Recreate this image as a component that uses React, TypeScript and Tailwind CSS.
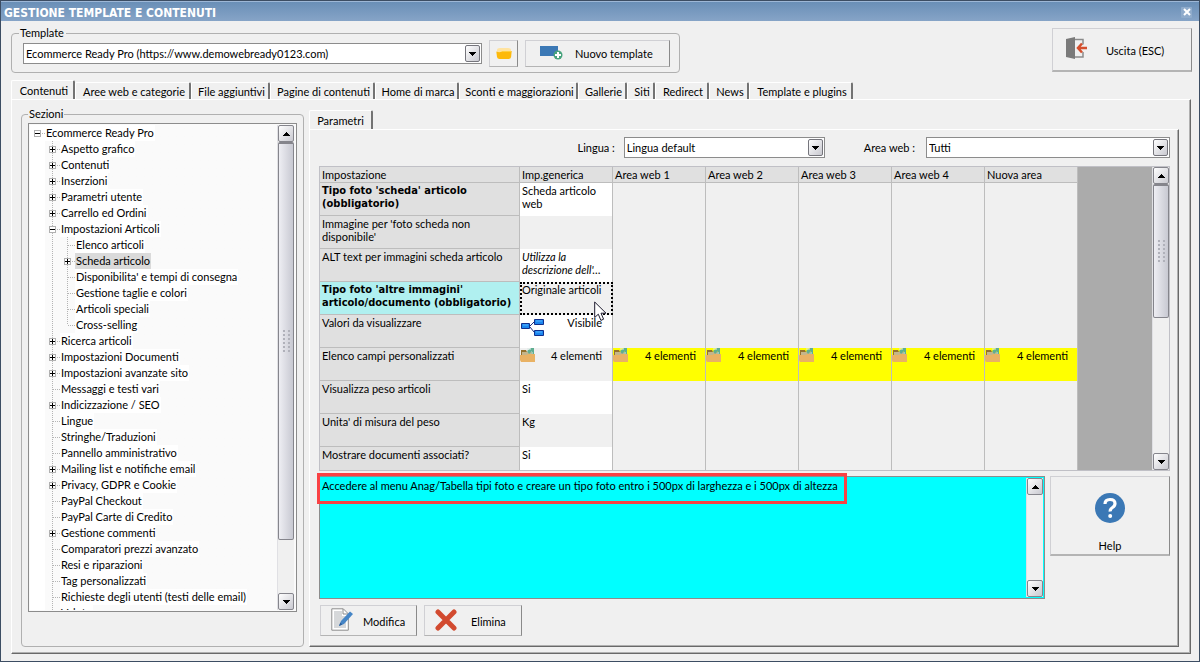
import React, { useState } from 'react';

interface Nodo {
  nome: string;
  livello: number;
  stato?: 'aperto' | 'chiuso';
}

interface Riga {
  nome: string;
  valore: string;
  tipo?: 'struttura' | 'elenco' | 'selezionata' | 'corsivo';
  obbligatorio?: boolean;
}

const schede = [
  { nome: 'Contenuti', width: 'w-[64px]' },
  { nome: 'Aree web e categorie', width: 'w-[116px]' },
  { nome: 'File aggiuntivi', width: 'w-[79px]' },
  { nome: 'Pagine di contenuti', width: 'w-[105px]' },
  { nome: 'Home di marca', width: 'w-[84px]' },
  { nome: 'Sconti e maggiorazioni', width: 'w-[119px]' },
  { nome: 'Gallerie', width: 'w-[49px]' },
  { nome: 'Siti', width: 'w-[28px]' },
  { nome: 'Redirect', width: 'w-[54px]' },
  { nome: 'News', width: 'w-[40px]' },
  { nome: 'Template e plugins', width: 'w-[104px]' }
];

const nodi: Nodo[] = [
  { nome: 'Ecommerce Ready Pro', livello: 0, stato: 'aperto' },
  { nome: 'Aspetto grafico', livello: 1, stato: 'chiuso' },
  { nome: 'Contenuti', livello: 1, stato: 'chiuso' },
  { nome: 'Inserzioni', livello: 1, stato: 'chiuso' },
  { nome: 'Parametri utente', livello: 1, stato: 'chiuso' },
  { nome: 'Carrello ed Ordini', livello: 1, stato: 'chiuso' },
  { nome: 'Impostazioni Articoli', livello: 1, stato: 'aperto' },
  { nome: 'Elenco articoli', livello: 2 },
  { nome: 'Scheda articolo', livello: 2, stato: 'chiuso' },
  { nome: "Disponibilita' e tempi di consegna", livello: 2 },
  { nome: 'Gestione taglie e colori', livello: 2 },
  { nome: 'Articoli speciali', livello: 2 },
  { nome: 'Cross-selling', livello: 2 },
  { nome: 'Ricerca articoli', livello: 1, stato: 'chiuso' },
  { nome: 'Impostazioni Documenti', livello: 1, stato: 'chiuso' },
  { nome: 'Impostazioni avanzate sito', livello: 1, stato: 'chiuso' },
  { nome: 'Messaggi e testi vari', livello: 1 },
  { nome: 'Indicizzazione / SEO', livello: 1, stato: 'chiuso' },
  { nome: 'Lingue', livello: 1 },
  { nome: 'Stringhe/Traduzioni', livello: 1 },
  { nome: 'Pannello amministrativo', livello: 1 },
  { nome: 'Mailing list e notifiche email', livello: 1, stato: 'chiuso' },
  { nome: 'Privacy, GDPR e Cookie', livello: 1, stato: 'chiuso' },
  { nome: 'PayPal Checkout', livello: 1 },
  { nome: 'PayPal Carte di Credito', livello: 1 },
  { nome: 'Gestione commenti', livello: 1, stato: 'chiuso' },
  { nome: 'Comparatori prezzi avanzato', livello: 1 },
  { nome: 'Resi e riparazioni', livello: 1 },
  { nome: 'Tag personalizzati', livello: 1 },
  { nome: 'Richieste degli utenti (testi delle email)', livello: 1 },
  { nome: 'Valute', livello: 1 }
];

const aree = ['Area web 1', 'Area web 2', 'Area web 3', 'Area web 4', 'Nuova area'];

const righe: Riga[] = [
  { nome: "Tipo foto 'scheda' articolo (obbligatorio)", valore: 'Scheda articolo web', obbligatorio: true },
  { nome: "Immagine per 'foto scheda non disponibile'", valore: '' },
  { nome: 'ALT text per immagini scheda articolo', valore: "Utilizza la descrizione dell'…", tipo: 'corsivo' },
  { nome: "Tipo foto 'altre immagini' articolo/documento (obbligatorio)", valore: 'Originale articoli', tipo: 'selezionata', obbligatorio: true },
  { nome: 'Valori da visualizzare', valore: 'Visibile', tipo: 'struttura' },
  { nome: 'Elenco campi personalizzati', valore: '4 elementi', tipo: 'elenco' },
  { nome: 'Visualizza peso articoli', valore: 'Si' },
  { nome: "Unita' di misura del peso", valore: 'Kg' },
  { nome: 'Mostrare documenti associati?', valore: 'Si' }
];

const Freccia: React.FC<{ su?: boolean }> = ({ su }) => (
  <svg width="7" height="4" viewBox="0 0 7 4" shapeRendering="crispEdges">
    <path d={su ? 'M3 0h1v1h1v1h1v1h1v1H0V3h1V2h1V1h1z' : 'M0 0h7v1H6v1H5v1H4v1H3V3H2V2H1V1H0z'} fill="#000" />
  </svg>
);

const BarraScorrimento: React.FC<{ thumb?: string }> = ({ thumb }) => {
  const bottone = 'flex h-[17px] w-full shrink-0 items-center justify-center rounded-[2px] border border-[#85858c] bg-linear-to-br from-white to-[#c9c9d0]';
  return (
    <div className="flex w-[17px] shrink-0 flex-col border-l border-[#e0e0e4] bg-[#f0f0f0]">
      <button type="button" aria-label="Scorri su" className={bottone}><Freccia su /></button>
      <div className="min-h-0 flex-1">
        {thumb && (
          <div className={`flex w-full items-center justify-center rounded-[2px] border border-t-2 border-[#85858c] bg-linear-to-r from-[#eeeef3] to-[#c8c9d2] ${thumb}`}>
            <svg width="7" height="23" viewBox="0 0 7 23" shapeRendering="crispEdges">
              {[0, 4, 8, 12, 16, 20].map(y => (
                <path key={y} d={`M0 ${y}h2v2h-2zM5 ${y}h2v2h-2z`} fill="#b0b1ba" />
              ))}
            </svg>
          </div>
        )}
      </div>
      <button type="button" aria-label="Scorri giù" className={bottone}><Freccia /></button>
    </div>
  );
};

const Tendina: React.FC<{ id: string; valore: string; className: string }> = ({ id, valore, className }) => (
  <div className={`relative h-[21px] ${className}`}>
    <select id={id} className="h-full w-full appearance-none border border-[#8c8c8c] bg-white pt-px pr-5 pl-[2px] text-[11px] leading-[18px]">
      <option>{valore}</option>
    </select>
    <span className="pointer-events-none absolute top-[2px] right-[2px] flex h-[17px] w-[15px] items-center justify-center rounded-[2px] border border-[#75757c] bg-linear-to-br from-white to-[#c9c9d0]">
      <Freccia />
    </span>
  </div>
);

// linee tratteggiate e quadratino +/- davanti alle voci dell'albero
const Guida: React.FC<{ stato?: string; linea: 'no' | 'intera' | 'meta'; ramo?: boolean }> = ({ stato, linea, ramo }) => (
  <svg width="15" height="16" viewBox="0 0 15 16" className="shrink-0" shapeRendering="crispEdges">
    {linea !== 'no' && <path d={linea === 'intera' ? 'M7.5 0V16' : 'M7.5 0V8'} stroke="#b4b4b4" strokeDasharray="1 1" />}
    {ramo && <path d="M8 8.5H15" stroke="#b4b4b4" strokeDasharray="1 1" />}
    {stato && <rect x="4.5" y="5.5" width="6" height="6" fill="#fff" stroke="#b0b0b0" />}
    {stato && <path d="M5 8.5h5" stroke="#000" />}
    {stato === 'chiuso' && <path d="M7.5 6v5" stroke="#000" />}
  </svg>
);

const IconaCartellaFile = () => (
  <svg width="16" height="16" viewBox="0 0 16 16" className="shrink-0">
    <path d="M1 2h5l1 2h7v5H1z" fill="#94712c" />
    <path d="M2 4h9v3H2z" fill="#c5b58a" />
    <path d="M7 3l4-3h3v6h-3l1-3-3 3z" fill="#5fae91" />
    <path d="M7 1h4M12 4v3" stroke="#d9e9e5" />
    <path d="M0 7h7l1-1h7v8H1L0 12z" fill="#e9b264" />
  </svg>
);

const IconaStruttura = () => (
  <svg width="23" height="18" viewBox="0 0 23 18" className="shrink-0">
    <path d="M9 7l4-4M9 8l4 5" stroke="#1a2f80" fill="none" />
    <g fill="#1c86ee" stroke="#10308e">
      <path d="M.5 4.500h8v5h-8zM13.500.5h9v5h-9zM13.500 11.500h9v5h-9z" />
    </g>
    <path d="M2 6h5M15 2h6M15 13h6" stroke="#56b4ff" />
  </svg>
);

const Cursore = () => (
  <svg width="14" height="21" viewBox="0 0 14 21" className="pointer-events-none absolute top-[19px] left-[74px] z-10">
    <path d="M.7 1v15.500l3.600-3.300 2.600 6.200 2.700-1.200-2.600-6h5z" fill="#fff" stroke="#1d1b2e" />
  </svg>
);

const bottone3d = 'flex items-center border border-t-[#d0d0d4] border-l-[#d0d0d4] border-r-[#8a8a8a] border-b-[#b4b4b4] bg-[#f0f0f0]';

const App: React.FC = () => {
  const [scheda, setScheda] = useState<string>('Contenuti');
  const [sezione, setSezione] = useState<string>('Scheda articolo');

  const guide = (nodo: Nodo, i: number) => {
    if (nodo.livello === 0) return <Guida stato={nodo.stato} linea="no" ramo />;
    if (nodo.livello === 1) {
      return (
        <>
          <span className="w-[15px] shrink-0" />
          <Guida stato={nodo.stato} linea="intera" ramo />
        </>
      );
    }
    const ultimo = nodi[i + 1]?.livello !== 2;
    return (
      <>
        <span className="w-[15px] shrink-0" />
        <Guida linea="intera" />
        <Guida stato={nodo.stato} linea={ultimo ? 'meta' : 'intera'} ramo />
      </>
    );
  };

  const sfondoValore = (riga: Riga, i: number) => {
    if (riga.tipo === 'selezionata') return 'bg-[#f0f0f0] outline-2 -outline-offset-2 outline-dotted outline-black';
    return i % 2 === 0 ? 'bg-white' : 'bg-[#f0f0f0]';
  };

  return (
    <div className="flex h-screen min-h-[560px] flex-col border border-[#3c4d63] bg-[#f0f0f0] font-['Lato','Liberation_Sans',sans-serif] text-[11px] leading-[13px] text-black">
      <header className="flex h-[20px] shrink-0 items-center justify-between border-t border-[#9db7d6] bg-linear-to-b from-[#6a8fb7] to-[#86a4c7] pr-[7px] pl-[3px]">
        <h1 className="pt-[3px] font-['DejaVu_Sans_Condensed','DejaVu_Sans',sans-serif] text-[12px] font-bold text-white">GESTIONE TEMPLATE E CONTENUTI</h1>
        <button type="button" aria-label="Chiudi" className="mt-px flex h-[11px] w-[11px] items-center justify-center rounded-[1px] bg-[#8fabcb]">
          <svg width="8" height="8" viewBox="0 0 8 8"><path d="M1 1l6 6M7 1L1 7" stroke="#fff" strokeWidth="2" /></svg>
        </button>
      </header>

      <div className="flex shrink-0 items-start justify-between pt-[6px] pr-[7px] pl-[10px]">
        <fieldset className="rounded-[4px] border border-[#b0b0b0] pr-[9px] pb-[5px] pl-[11px]">
          <legend className="ml-[-4px] pl-px pr-[2px] leading-3">Template</legend>
          <div className="flex items-center gap-[7px] pt-px">
            <label htmlFor="template" className="sr-only">Template</label>
            <Tendina id="template" valore="Ecommerce Ready Pro (https://www.demowebready0123.com)" className="w-[459px]" />
            <button type="button" aria-label="Apri cartella" className={`${bottone3d} h-[27px] w-[29px] justify-center`}>
              <svg width="16" height="13" viewBox="0 0 16 13">
                <path d="M1 3q0-2 3-2h8q3 0 3 2v4H1z" fill="#ffe3a0" />
                <path d="M.3 4.500q3 1.200 5 .3t4-.8h6.400l-.6 6q-.3 2-2.600 2h-9Q1.300 12 1 10z" fill="#fdb90b" />
                <path d="M6 4.500h9" stroke="#ffd040" />
              </svg>
            </button>
            <button type="button" className={`${bottone3d} h-[27px] w-[145px] pl-[14px]`}>
              <svg width="23" height="14" viewBox="0 0 23 14" className="mr-[12px] mb-[2px]">
                <path d="M0 0h18v10H0z" fill="#3b78b5" />
                <circle cx="18" cy="9" r="4.500" fill="#48a37d" />
                <path d="M15 9h6M18 6v6" stroke="#fff" strokeWidth="2" />
              </svg>
              Nuovo template
            </button>
          </div>
        </fieldset>
        <button type="button" className={`${bottone3d} mt-px h-[44px] w-[140px] border-b-2 border-b-[#8a8a8a] pt-px pl-[13px]`}>
          <svg width="22" height="22" viewBox="0 0 22 22" className="mr-[18px] mb-[4px]">
            <path d="M9 2.500h8v5M17 15v5H9" fill="none" stroke="#8a8a8a" strokeWidth="1.500" />
            <path d="M0 2l9-2v22l-9-2z" fill="#7a7a7a" />
            <path d="M21 11h-8M16 6.500L12 11l4 4.500" fill="none" stroke="#d4502f" strokeWidth="2.500" />
          </svg>
          Uscita (ESC)
        </button>
      </div>

      <div role="tablist" className="mt-[7px] flex h-[19px] shrink-0 items-end pl-[10px]">
        {schede.map(s => (
          <button
            key={s.nome}
            type="button"
            role="tab"
            aria-selected={scheda === s.nome}
            onClick={() => setScheda(s.nome)}
            className={`shrink-0 rounded-t-[2px] border-t border-r-2 border-l border-t-white border-r-[#737373] border-l-white pl-[3px] text-center whitespace-nowrap ${s.width} ${scheda === s.nome ? '-mb-px h-[20px] bg-[#f0f0f0]' : 'h-[17px] pt-px'}`}
          >
            {s.nome}
          </button>
        ))}
      </div>

      <main className="mr-[8px] mb-[7px] ml-[10px] flex min-h-0 flex-1 gap-[5px] border border-t-white border-r-[#696969] border-b-[#696969] border-l-white pt-[8px] pr-[11px] pb-[6px] pl-[9px] shadow-[inset_-1px_-1px_#b0b0b0]">
        <fieldset className="flex min-h-0 w-[283px] shrink-0 flex-col rounded-[4px] border border-[#b0b0b0] px-[6px] pt-[3px] pb-[34px]">
          <legend className="px-px leading-3">Sezioni</legend>
          <div className="flex min-h-0 flex-1 overflow-hidden border border-[#8c8c8c] bg-[#fafafa] py-px pr-[2px] pl-px">
            <ul role="tree" className="min-w-0 flex-1 overflow-hidden bg-linear-to-r from-white from-[15px] to-[#fafafa] to-[15px]">
              {nodi.map((nodo, i) => (
                <li key={nodo.nome + i} role="treeitem" aria-selected={sezione === nodo.nome} className="flex h-4 items-center">
                  {guide(nodo, i)}
                  <button
                    type="button"
                    onClick={() => setSezione(nodo.nome)}
                    className={`h-4 px-px leading-4 whitespace-nowrap ${sezione === nodo.nome ? 'bg-[#dadada]' : 'bg-white'}`}
                  >
                    {nodo.nome}
                  </button>
                </li>
              ))}
            </ul>
            <BarraScorrimento thumb="h-[398px]" />
          </div>
        </fieldset>

        <section className="flex min-w-0 flex-1 flex-col pt-[2px]">
          <div role="tablist" className="flex h-[19px] shrink-0">
            <button type="button" role="tab" aria-selected="true" className="-mb-px h-[20px] w-[64px] rounded-t-[2px] border-t border-r-2 border-l border-t-white border-r-[#737373] border-l-white bg-[#f0f0f0]">
              Parametri
            </button>
          </div>
          <div className="flex min-h-0 flex-1 flex-col border border-t-white border-r-[#696969] border-b-[#696969] border-l-white pt-[7px] pr-[8px] pb-[10px] pl-[9px] shadow-[inset_-1px_-1px_#b0b0b0]">
            <div className="flex shrink-0 items-center justify-end">
              <label htmlFor="lingua" className="mr-[9px]">Lingua :</label>
              <Tendina id="lingua" valore="Lingua default" className="w-[201px]" />
              <label htmlFor="area" className="mr-[11px] ml-[39px]">Area web :</label>
              <Tendina id="area" valore="Tutti" className="w-[244px]" />
            </div>

            <div className="mt-[8px] flex min-h-0 flex-1 overflow-hidden border border-[#c0c0c6] bg-[#ababab]">
              <div className="min-w-0 flex-1 overflow-hidden">
                <table className="w-[758px] table-fixed border-separate border-spacing-0 bg-[#f0f0f0]">
                  <thead>
                    <tr className="h-[16px] bg-[#e0e0e0] text-left">
                      <th scope="col" className="w-[200px] border-r border-b border-[#bdbdbd] p-0 pl-[2px] font-normal">Impostazione</th>
                      <th scope="col" className="w-[93px] border-r border-b border-[#bdbdbd] p-0 pl-[2px] font-normal">Imp.generica</th>
                      {aree.map(area => (
                        <th key={area} scope="col" className="w-[93px] border-r border-b border-[#bdbdbd] p-0 pl-[2px] font-normal">{area}</th>
                      ))}
                    </tr>
                  </thead>
                  <tbody>
                    {righe.map((riga, i) => (
                      <tr key={riga.nome} className="h-[33px] align-top">
                        <th
                          scope="row"
                          className={`border-r border-b border-[#bdbdbd] p-0 pt-px pl-[2px] text-left ${riga.obbligatorio ? "font-['DejaVu_Sans_Condensed','DejaVu_Sans',sans-serif] font-bold" : 'font-normal'} ${riga.tipo === 'selezionata' ? 'bg-[#b0f0f0]' : 'bg-[#e0e0e0]'}`}
                        >
                          {riga.nome}
                        </th>
                        <td className={`relative border-r border-[#bdbdbd] p-0 ${sfondoValore(riga, i)}`}>
                          {riga.tipo === 'struttura' || riga.tipo === 'elenco' ? (
                            <div className="flex items-start justify-between pr-[10px]">
                              {riga.tipo === 'struttura' ? <span className="pt-[4px] pl-px"><IconaStruttura /></span> : <IconaCartellaFile />}
                              <span className="pt-px">{riga.valore}</span>
                            </div>
                          ) : (
                            <div className={`pt-px pl-[2px] ${riga.tipo === 'corsivo' ? 'italic' : ''}`}>{riga.valore}</div>
                          )}
                          {riga.tipo === 'selezionata' && <Cursore />}
                        </td>
                        {aree.map(area => (
                          <td key={area} className={`border-r border-[#bdbdbd] p-0 ${riga.tipo === 'elenco' ? 'bg-[#ffff00]' : ''}`}>
                            {riga.tipo === 'elenco' && (
                              <div className="flex items-start justify-between pr-[9px]">
                                <IconaCartellaFile />
                                <span className="pt-px">4 elementi</span>
                              </div>
                            )}
                          </td>
                        ))}
                      </tr>
                    ))}
                  </tbody>
                </table>
              </div>
              <BarraScorrimento thumb="h-[134px]" />
            </div>

            <div className="mt-[5px] flex shrink-0 items-start gap-[5px]">
              <div className="relative flex h-[123px] min-w-0 flex-1 border border-[#8c8c8c] bg-[#00ffff] p-px">
                <textarea
                  readOnly
                  aria-label="Descrizione impostazione"
                  className="min-w-0 flex-1 resize-none pt-px pl-px text-[11px] leading-[13px] outline-none"
                  value="Accedere al menu Anag/Tabella tipi foto e creare un tipo foto entro i 500px di larghezza e i 500px di altezza"
                />
                <BarraScorrimento />
                <div className="pointer-events-none absolute top-[-4px] left-[-3px] h-[31px] w-[530px] border-3 border-[#f94144]" />
              </div>
              <button type="button" className={`${bottone3d} h-[80px] w-[120px] flex-col justify-between border-b-2 border-b-[#8a8a8a] pt-[16px] pb-[2px]`}>
                <svg width="30" height="30" viewBox="0 0 30 30">
                  <circle cx="15" cy="15" r="15" fill="#3b78b5" />
                  <path d="M10 11q0-4.500 5-4.500t5 4q0 2.500-2.500 4T15.200 18.500" fill="none" stroke="#fff" strokeWidth="3.200" />
                  <circle cx="15.200" cy="23" r="2" fill="#fff" />
                </svg>
                Help
              </button>
            </div>

            <div className="mt-[6px] flex shrink-0 gap-[7px] pl-px">
              <button type="button" className={`${bottone3d} h-[31px] w-[97px] pt-px pl-[10px]`}>
                <svg width="23" height="23" viewBox="0 0 23 23" className="mr-[9px] mb-[3px]">
                  <path d="M.8.8h11.500l5 5v16.400H.8z" fill="#fff" stroke="#8c8c8c" />
                  <path d="M3 3h8v5h4v12H3z" fill="#d6d8da" />
                  <path d="M12 1v5h5" fill="none" stroke="#8c8c8c" />
                  <path d="M8 18l2-5L19 3.500l3 2.500-9 10z" fill="#4585c6" />
                  <path d="M8 18l1.300-3.500 2 2z" fill="#2c5f9b" />
                </svg>
                Modifica
              </button>
              <button type="button" className={`${bottone3d} h-[31px] w-[98px] pt-px pl-[10px]`}>
                <svg width="22" height="22" viewBox="0 0 22 22" className="mr-[14px] mb-[3px]">
                  <path d="M3 3l16 16M19 3L3 19" stroke="#d24a2f" strokeWidth="5" strokeLinecap="round" />
                </svg>
                Elimina
              </button>
            </div>
          </div>
        </section>
      </main>
    </div>
  );
};

export default App;
